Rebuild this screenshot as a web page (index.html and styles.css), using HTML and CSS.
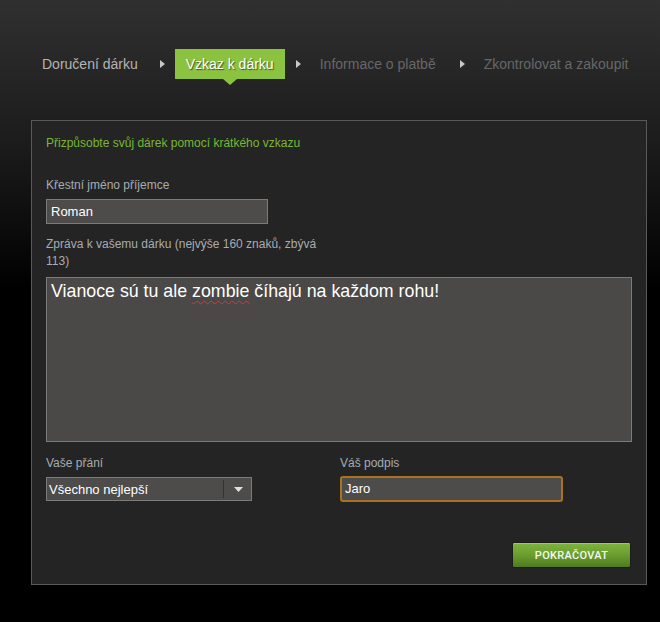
FILE: index.html
```html
<!DOCTYPE html>
<html lang="cs">
<head>
<meta charset="utf-8">
<title>Vzkaz k dárku</title>
<link rel="stylesheet" href="styles.css">
</head>
<body>
<div class="page">
  <nav class="steps">
    <span class="step done">Doručení dárku</span>
    <svg class="sep" width="5" height="8" viewBox="0 0 5 8"><path d="M0 0 L5 4 L0 8 Z" fill="#c8c8c8"/></svg>
    <span class="step active">Vzkaz k dárku</span>
    <svg class="sep" width="5" height="8" viewBox="0 0 5 8"><path d="M0 0 L5 4 L0 8 Z" fill="#c8c8c8"/></svg>
    <span class="step todo">Informace o platbě</span>
    <svg class="sep" width="5" height="8" viewBox="0 0 5 8"><path d="M0 0 L5 4 L0 8 Z" fill="#c8c8c8"/></svg>
    <span class="step todo">Zkontrolovat a zakoupit</span>
  </nav>

  <section class="panel">
    <h2 class="panel-title">Přizpůsobte svůj dárek pomocí krátkého vzkazu</h2>

    <label class="label first">Křestní jméno příjemce</label>
    <div class="input name-input">Roman</div>

    <label class="label message-label">Zpráva k vašemu dárku (nejvýše 160 znaků, zbývá 113)</label>
    <div class="textarea">Vianoce sú tu ale <span class="misspelled">zombie</span> číhajú na každom rohu!</div>

    <div class="row">
      <div class="col wish">
        <label class="label">Vaše přání</label>
        <div class="select">
          <span class="select-value">Všechno nejlepší</span>
          <span class="select-arrow"><svg width="9" height="5" viewBox="0 0 9 5"><path d="M0 0 H9 L4.5 5 Z" fill="#e0e0e0"/></svg></span>
        </div>
      </div>
      <div class="col sign">
        <label class="label">Váš podpis</label>
        <div class="input sign-input">Jaro</div>
      </div>
    </div>

    <div class="actions">
      <button class="btn">POKRAČOVAT</button>
    </div>
  </section>
</div>
</body>
</html>
```

FILE: styles.css
```css
* { box-sizing: border-box; }
html, body { margin: 0; padding: 0; }
body {
  width: 660px;
  height: 622px;
  overflow: hidden;
  background: linear-gradient(to bottom, #303030 0px, #1c1c1c 140px, #000 290px, #000 100%);
  font-family: "Liberation Sans", Arial, sans-serif;
}
.page { padding-top: 49px; }

.steps {
  display: flex;
  align-items: center;
  height: 30px;
  padding-left: 31px;
}
.step {
  position: relative;
  display: block;
  height: 30px;
  line-height: 30px;
  padding: 0 11px;
  font-size: 14px;
  white-space: nowrap;
}
.step.done { color: #b4b4b4; }
.step.todo { color: #666769; padding: 0 13px 0 9px; }
.step.active {
  background: #8bc23f;
  color: #fff;
  text-shadow: 1px 1px 1px rgba(0,0,0,0.55);
  width: 110px;
}
.step.active::after {
  content: "";
  position: absolute;
  left: 48px;
  top: 30px;
  border-left: 7px solid transparent;
  border-right: 7px solid transparent;
  border-top: 6px solid #8bc23f;
}
.sep { display: block; margin: 0 10px 0 11px; flex: none; }

.panel {
  margin: 41px 0 0 31px;
  width: 616px;
  height: 465px;
  border: 1px solid #595959;
  background: #242424;
  padding: 14px 14px 0 14px;
}
.panel-title {
  margin: 0;
  font-size: 12px;
  line-height: 16px;
  font-weight: normal;
  color: #78b834;
}
.label {
  display: block;
  font-size: 12px;
  line-height: 16px;
  color: #a8acb0;
}
.label.first { margin-top: 26px; }
.input {
  height: 25px;
  background: #4d4c4a;
  border: 1px solid #7b7b7b;
  color: #fff;
  font-size: 13px;
  line-height: 23px;
  padding: 0 4px;
}
.name-input { width: 222px; margin-top: 6px; }
.message-label {
  width: 290px;
  margin-top: 12px;
  line-height: 17px;
}
.textarea {
  margin-top: 7px;
  height: 165px;
  background: #4a4948;
  border: 1px solid #7b7b7b;
  color: #fff;
  font-size: 17.8px;
  line-height: 21px;
  padding: 3px 4px;
}
.misspelled {
  text-decoration: underline wavy #d23a3a;
  text-decoration-thickness: 1px;
  text-underline-offset: 3px;
}

.row {
  display: grid;
  grid-template-columns: 294px 1fr;
  margin-top: 13px;
}
.select {
  margin-top: 6px;
  width: 206px;
  height: 24px;
  display: flex;
  align-items: center;
  background: #4d4c4a;
  border: 1px solid #7b7b7b;
}
.select-value {
  flex: 1;
  color: #fff;
  font-size: 13px;
  padding-left: 2px;
}
.select-arrow {
  width: 28px;
  height: 18px;
  border-left: 1px solid #333;
  display: flex;
  align-items: center;
  justify-content: center;
  padding-left: 1px;
}
.select-arrow svg { display: block; }
.sign-input {
  margin-top: 5px;
  width: 223px;
  height: 26px;
  border: 2px solid #a87220;
  border-radius: 3px;
  line-height: 22px;
  padding: 0 3px;
}

.actions {
  display: flex;
  justify-content: flex-end;
  margin-top: 40px;
}
.btn {
  width: 119px;
  height: 26px;
  margin-right: 1px;
  padding: 0;
  border: 1px solid #1c1c1c;
  border-radius: 2px;
  background: linear-gradient(to bottom, #7fb43e 0%, #6a9d2f 50%, #4f7a1f 100%);
  box-shadow: inset 0 1px 0 #9ccc5a;
  color: #f4f8ec;
  font-family: Roboto, "Liberation Sans", Arial, sans-serif;
  font-weight: 500;
  font-size: 11px;
  letter-spacing: 0.3px;
}
```
